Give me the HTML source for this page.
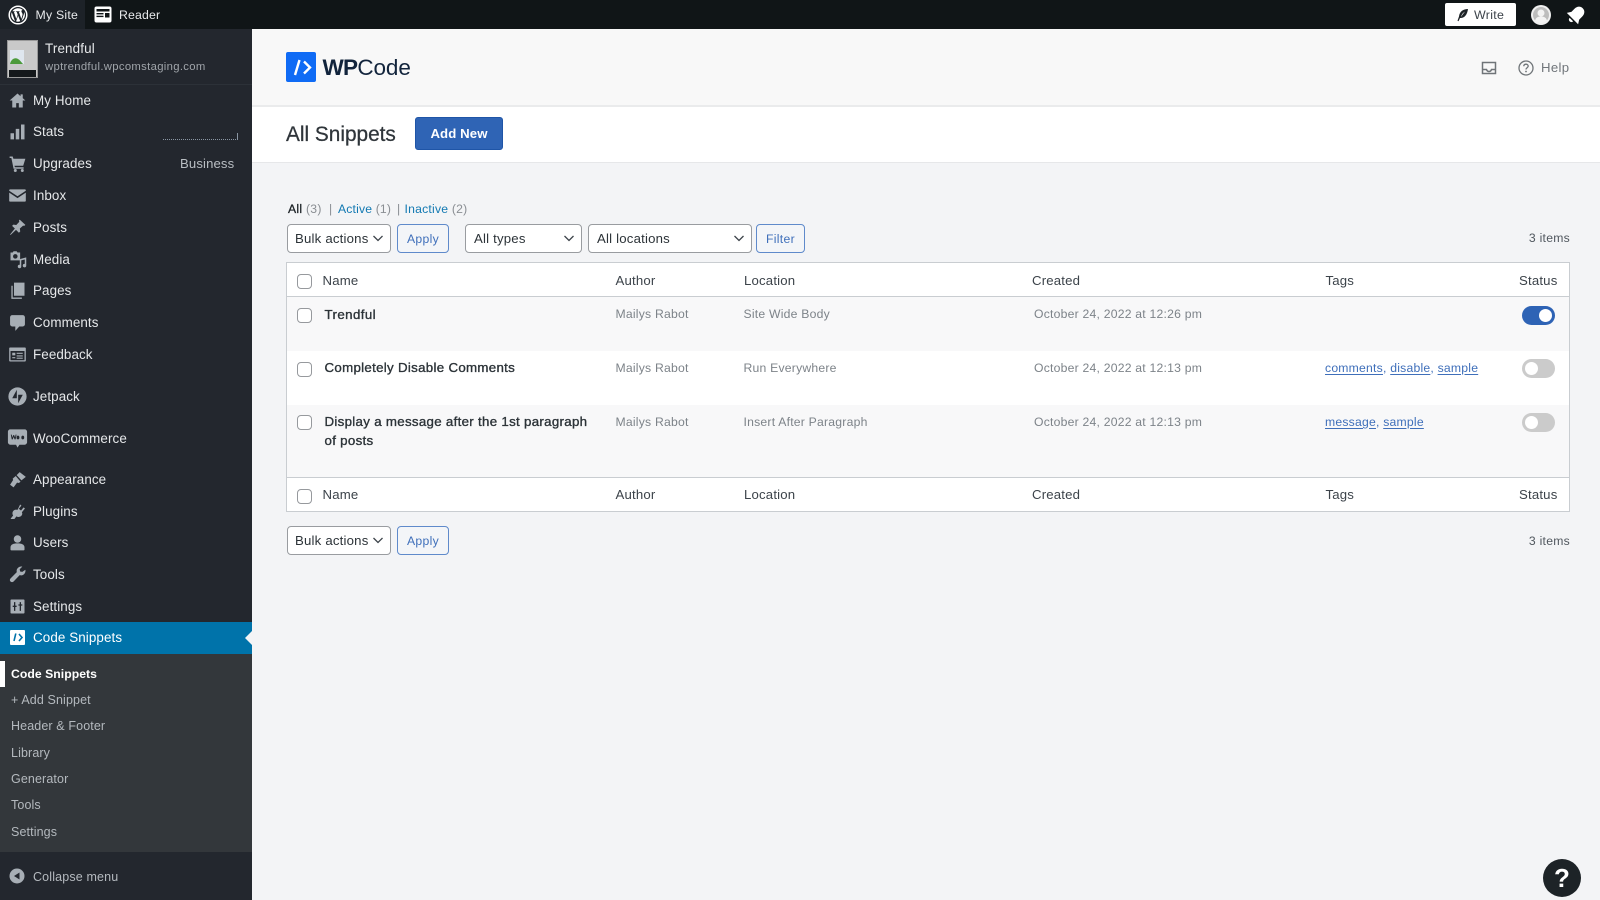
<!DOCTYPE html>
<html lang="en"><head><meta charset="utf-8"><title>All Snippets</title>
<style>
*{box-sizing:border-box}
html,body{margin:0;padding:0;width:1600px;height:900px;overflow:hidden;background:#f3f4f6;font-family:"Liberation Sans",sans-serif;-webkit-font-smoothing:antialiased}
.a{position:absolute}
.t{position:absolute;height:20px;line-height:20px;white-space:nowrap}
#top{left:0;top:0;width:1600px;height:29px;background:#101517}
#ms{left:0;top:0;width:85px;height:29px;background:#1d2228}
#side{left:0;top:29px;width:252px;height:871px;background:#23272e}
#sub{left:0;top:654px;width:252px;height:198px;background:#33373b}
.m{left:33px;font-size:13.4px;color:#e6e8ea;letter-spacing:.1px}
.s{left:11px;font-size:12.5px;color:#b4b9be;letter-spacing:.12px}
.i{position:absolute;left:6.500px;width:21px;height:21px;fill:#a7aeb5}
.hd{font-size:13.2px;color:#3c434a;letter-spacing:.18px}
.cell{font-size:12.2px;color:#7d8389;letter-spacing:.22px}
.nm{font-size:13.3px;color:#2c3338;font-weight:400;letter-spacing:.3px;-webkit-text-stroke:.35px #2c3338}
.lk{font-size:12.2px;color:#3f6fba;letter-spacing:.22px}
.lk u{text-underline-offset:2px}
.cb{position:absolute;left:297px;width:15px;height:15px;background:#fff;border:1px solid #96999d;border-radius:4px}
.sel{position:absolute;height:29px;background:#fff;border:1px solid #999ca0;border-radius:4px;font-size:13.2px;line-height:27px;padding-left:7px;color:#2c3338;letter-spacing:.2px}
.sel svg{position:absolute;right:6px;top:9px}
.btn{position:absolute;height:29px;background:#f3f5f8;border:1px solid #5f8acb;border-radius:4px;font-size:12.2px;line-height:28px;text-align:center;color:#3f6fba;letter-spacing:.3px}
.tg{position:absolute;left:1522px;width:33px;height:19px;border-radius:10px;background:#cbcbcb}
.tg i{position:absolute;left:3px;top:3px;width:13px;height:13px;border-radius:50%;background:#fff}
.tg.on{background:#2e63b5}.tg.on i{left:17px}
</style></head><body>

<div class="a" style="left:252px;top:29px;width:1348px;height:76px;background:#f8f8f8"></div>
<div class="a" style="left:252px;top:105px;width:1348px;height:2px;background:#eaebec"></div>
<div class="a" style="left:252px;top:107px;width:1348px;height:55px;background:#fff"></div>
<div class="a" style="left:252px;top:162px;width:1348px;height:1px;background:#e6e7e9"></div>

<div class="a" id="top"></div>
<div class="a" id="ms"></div>
<svg class="a" style="left:8px;top:5px" width="20" height="20" viewBox="0 0 20 20"><circle cx="10" cy="10" r="8.8" fill="none" stroke="#fff" stroke-width="1.5"/><path fill="#fff" d="M3.2 10c0 2.7 1.6 5 3.8 6.1L3.8 7.2c-.4.9-.6 1.8-.6 2.8zm11.4-.3c0-.8-.3-1.4-.6-1.9-.3-.6-.6-1-.6-1.6 0-.6.5-1.2 1.2-1.2h.1A6.8 6.8 0 0 0 4.4 6.3h.4c.7 0 1.8-.1 1.8-.1.4 0 .4.5 0 .6l-.7.1 2.4 7.1 1.4-4.3-1-2.8-.7-.1c-.4 0-.3-.6 0-.6 0 0 1.1.1 1.8.1.7 0 1.8-.1 1.8-.1.4 0 .4.5 0 .6l-.7.1 2.4 7 .7-2.2c.3-.9.5-1.6.5-2.1zM10.1 10.6l-2 5.8a6.8 6.8 0 0 0 4.2-.1l-2.2-5.7zm5.9-3.9c0 .2.1.5.1.7 0 .7-.1 1.5-.5 2.5l-2.1 6a6.800 6.800 0 0 0 2.500-9.200z"/></svg>
<div class="t" style="left:35.500px;top:5px;font-size:12.3px;color:#e8eaec;letter-spacing:.22px">My Site</div>
<svg class="a" style="left:94px;top:6px" width="18" height="17" viewBox="0 0 18 17"><rect x="0.5" y="0.5" width="17" height="16" rx="2" fill="#fff"/><rect x="2.5" y="3" width="13" height="2.5" fill="#101517"/><rect x="2.5" y="7" width="7" height="1.4" fill="#101517"/><rect x="2.5" y="9.7" width="7" height="1.4" fill="#101517"/><rect x="11" y="7" width="4.5" height="4.500" fill="#101517"/></svg>
<div class="t" style="left:119px;top:5px;font-size:12.3px;color:#e8eaec;letter-spacing:.15px">Reader</div>

<div class="a" style="left:1445px;top:3px;width:71px;height:23px;background:#fff;border-radius:2px"></div>
<svg class="a" style="left:1456px;top:8px" width="13" height="14" viewBox="0 0 13 14"><path fill="#1d2327" d="M12 1C7 1 3.6 3.6 3 8.5L1.5 12.8l1 .4L4 10c4.5.3 7.3-3.4 8-9zM5 9c.6-2.6 2-4.2 4-5.4C7.600 5.200 6.400 7 5 9z"/></svg>
<div class="t" style="left:1474px;top:5px;font-size:12.4px;color:#3c434a;letter-spacing:.3px">Write</div>
<svg class="a" style="left:1531px;top:5px" width="20" height="20" viewBox="0 0 20 20"><circle cx="10" cy="10" r="10" fill="#f0f0f0"/><circle cx="10" cy="10" r="8" fill="#bdbdbd"/><circle cx="10" cy="8" r="3.500" fill="#f3f3f3"/><path d="M4 15.500c1-3.500 3.500-4 6-4s5 .5 6 4a8 8 0 0 1-12 0z" fill="#f3f3f3"/></svg>
<svg class="a" style="left:1566px;top:4px" width="20" height="22" viewBox="0 0 20 22"><g transform="rotate(45 10 11)" fill="#fff"><path d="M10 1.500c-3.500 0-5.500 2.700-5.500 6.300v4.200L2 16h16l-2.500-4V7.800c0-3.600-2-6.300-5.500-6.300z"/><path d="M7.500 17.500h5a2.500 2.500 0 0 1-5 0z"/></g></svg>

<div class="a" id="side"></div>
<div class="a" style="left:0;top:84px;width:252px;height:1px;background:#2c3138"></div>
<div class="a" style="left:7px;top:40px;width:31px;height:38px;background:#c9c9c9;border:1px solid #999"></div>
<div class="a" style="left:9px;top:69.500px;width:27px;height:7px;background:#14181b"></div>
<svg class="a" style="left:9px;top:50px" width="16" height="15" viewBox="0 0 16 15"><rect width="14" height="14" x="1" y="0" fill="#dfe6ee"/><path d="M1 14c1-5 5-7 8-5 2 1 3 3 5 5z" fill="#4c9a3a"/></svg>
<div class="t" style="left:45px;top:39px;font-size:13.400px;color:#e6e8ea;letter-spacing:.15px">Trendful</div>
<div class="t" style="left:45px;top:57px;font-size:11.300px;color:#a0a5aa;letter-spacing:.32px">wptrendful.wpcomstaging.com</div>

<div class="t m" style="top:91px">My Home</div>
<svg class="i" style="top:90px" viewBox="0 0 24 24"><path d="M12 4L3 12h3v8h4.500v-5h3v5H18v-8h3l-3-2.700V5h-2.500v2.100z"/></svg>
<div class="t m" style="top:122px">Stats</div>
<svg class="i" style="top:121px" viewBox="0 0 24 24"><rect x="4" y="14" width="4" height="7"/><rect x="10" y="9" width="4" height="12"/><rect x="16" y="4" width="4" height="17"/></svg>
<div class="a" style="left:163px;top:139px;width:75px;height:1px;border-top:1px dotted #8a96a3"></div>
<div class="a" style="left:237px;top:133px;width:1px;height:7px;background:#8a96a3"></div>
<div class="t m" style="top:154px">Upgrades</div>
<svg class="i" style="top:153px" viewBox="0 0 24 24"><path d="M3 4h3.500l.8 2.500H21l-2.500 8H8.500l.5 1.800h10v1.700H7.500L5 5.700H3z"/><circle cx="9.500" cy="20" r="1.700"/><circle cx="17.500" cy="20" r="1.700"/></svg>
<div class="t" style="left:180px;top:154px;font-size:13.100px;color:#b9bec3;letter-spacing:.15px">Business</div>
<div class="t m" style="top:186px">Inbox</div>
<svg class="i" style="top:185px" viewBox="0 0 24 24"><path d="M3.500 5h17c.6 0 1 .4 1 1v.5L12 12.800 2.500 6.500V6c0-.6.400-1 1-1zM2.500 8.700L12 15l9.500-6.300V18c0 .6-.4 1-1 1h-17c-.6 0-1-.4-1-1z"/></svg>
<div class="t m" style="top:218px">Posts</div>
<svg class="i" style="top:217px" viewBox="0 0 24 24"><path d="M14.500 3l6.500 6-1.300 1.200-1.300-.4-3.700 3.400.4 3.300-1.500 1.500-3.300-3.300L4 20.500l-.5-.5 5.500-6.800-3.200-3 1.500-1.500 3.300.4 3.500-3.700-.5-1.200z"/></svg>
<div class="t m" style="top:250px">Media</div>
<svg class="i" style="top:249px" viewBox="0 0 24 24"><path d="M4 4h2.500l1-1.500h3.500L12 4h3v9H4zm5.500 1.800a2.600 2.600 0 1 0 0 5.200 2.600 2.600 0 0 0 0-5.200z"/><path d="M22 9.500V19a2 2 0 1 1-1.700-2v-5l-4 1V20a2 2 0 1 1-1.700-2v-6.500z"/></svg>
<div class="t m" style="top:281px">Pages</div>
<svg class="i" style="top:280px" viewBox="0 0 24 24"><path d="M8 3h12v15H8z"/><path d="M5 6.500h1.500V20H17v1.500H5z"/></svg>
<div class="t m" style="top:313px">Comments</div>
<svg class="i" style="top:312px" viewBox="0 0 24 24"><path d="M6 3.500h12c1.300 0 2.500 1.100 2.500 2.500v8c0 1.300-1.200 2.500-2.500 2.500h-4l-4.500 5v-5H6c-1.400 0-2.500-1.200-2.500-2.500V6c0-1.400 1.100-2.500 2.500-2.500z"/></svg>
<div class="t m" style="top:345px">Feedback</div>
<svg class="i" style="top:344px" viewBox="0 0 24 24"><path fill-rule="evenodd" d="M3.500 4h17c.6 0 1 .4 1 1v14c0 .6-.4 1-1 1h-17c-.6 0-1-.4-1-1V5c0-.6.400-1 1-1zM4 8v10.500h16V8zm2 2h3.500v3H6zm5 0h7v1.300h-7zm0 3h7v1.300h-7zm-5 2h3.500v1.300H6zm5 .5h7v1.300h-7z"/></svg>
<div class="t m" style="top:387px">Jetpack</div>
<svg class="i" style="top:385px;left:5.500px;width:23px;height:23px" viewBox="0 0 24 24"><path fill-rule="evenodd" d="M12 2.500a9.500 9.500 0 1 1 0 19 9.500 9.500 0 0 1 0-19zM11.300 5L6.500 13.800h4.800zm1.400 5.200V19l4.800-8.800z"/></svg>
<div class="t m" style="top:429px">WooCommerce</div>
<svg class="i" style="top:426px;left:5.500px;width:23px;height:23px" viewBox="0 0 24 24"><path fill-rule="evenodd" d="M4.500 3.500h15c1.300 0 2.500 1.100 2.500 2.500v11c0 1.300-1.200 2.500-2.500 2.500H14l-2 3-1.500-3h-6C3.100 19.500 2 18.300 2 17V6c0-1.400 1.100-2.500 2.500-2.500zM5 9l1 5h1l1-2.700L9 14h1l1-5h-1l-.5 3L8.500 9.500h-1L6.500 12 6 9zm7.500 1a1.500 2 0 1 0 0 4 1.500 2 0 0 0 0-4zm5 0a1.500 2 0 1 0 0 4 1.500 2 0 0 0 0-4z"/></svg>
<div class="t m" style="top:470px">Appearance</div>
<svg class="i" style="top:469px" viewBox="0 0 24 24"><path d="M14.500 3.500l7 5.500-5 4-5.500-6zM10 8l5.500 6.500-2 1.500-2-.5-4 5.500L3.500 18l3.500-5.500-.5-1.500z"/></svg>
<div class="t m" style="top:502px">Plugins</div>
<svg class="i" style="top:501px" viewBox="0 0 24 24"><path d="M15 4l1.500 1.300-3 3.500 2.500 2 3-3.500 1.500 1.300-3.500 4.200c.8 1.500.5 3-.7 4.200-1.500 1.400-3.800 1.700-5.500.5l-2.300 3H4.500l-.3-.4L7 16.500C5.800 14.800 6 12.600 7.500 11c1.300-1.300 3-1.500 4.500-.8z"/></svg>
<div class="t m" style="top:533px">Users</div>
<svg class="i" style="top:532px" viewBox="0 0 24 24"><circle cx="12" cy="8" r="4.300"/><path d="M4 20v-2.500c0-3 3-4.500 8-4.500s8 1.500 8 4.500V20c0 .6-.4 1-1 1H5c-.6 0-1-.4-1-1z"/></svg>
<div class="t m" style="top:565px">Tools</div>
<svg class="i" style="top:564px" viewBox="0 0 24 24"><path d="M21 6.500c.4 2-.2 3.700-1.500 5-1.500 1.400-3.300 1.800-5 1.200L7.500 20c-1 1-2.500 1-3.500 0s-1-2.500 0-3.500l7.200-7.200c-.5-1.800-.1-3.500 1.200-4.800C13.700 3.200 15.500 2.600 17.500 3l-3 3L15 8.500l2.500.5z"/></svg>
<div class="t m" style="top:597px">Settings</div>
<svg class="i" style="top:596px" viewBox="0 0 24 24"><path fill-rule="evenodd" d="M5 4h14c.6 0 1 .4 1 1v14c0 .6-.4 1-1 1H5c-.6 0-1-.4-1-1V5c0-.6.400-1 1-1zm3 3v4H6.500v1.500H8V17h1.500v-4.500H11V11H9.500V7zm6.500 0v2.500H13V11h1.500v6H16v-6h1.500V9.500H16V7z"/></svg>

<div class="a" style="left:0;top:622px;width:252px;height:32px;background:#0073aa"></div>
<div class="a" style="left:245px;top:630px;width:0;height:0;border-top:8px solid transparent;border-bottom:8px solid transparent;border-right:8px solid #f3f4f6"></div>
<svg class="a" style="left:10px;top:630px" width="15" height="15" viewBox="0 0 15 15"><rect width="15" height="15" rx="1" fill="#fff"/><path d="M5.800 3.500L4 11M9 4l3 3.500L9 11" fill="none" stroke="#0073aa" stroke-width="1.600"/></svg>
<div class="t m" style="top:628px;color:#fff">Code Snippets</div>

<div class="a" id="sub"></div>
<div class="a" style="left:0;top:661px;width:5px;height:26px;background:#fff"></div>
<div class="t s" style="top:664px;color:#fff;font-weight:700;font-size:12.2px;letter-spacing:.05px">Code Snippets</div>
<div class="t s" style="top:690px">+ Add Snippet</div>
<div class="t s" style="top:716px">Header &amp; Footer</div>
<div class="t s" style="top:743px">Library</div>
<div class="t s" style="top:769px">Generator</div>
<div class="t s" style="top:795px">Tools</div>
<div class="t s" style="top:822px">Settings</div>
<svg class="a" style="left:9px;top:868px" width="16" height="16" viewBox="0 0 16 16"><circle cx="8" cy="8" r="7.500" fill="#a7aeb5"/><path d="M10.500 4.500v7L5 8z" fill="#23272e"/></svg>
<div class="t" style="left:33px;top:867px;font-size:12.500px;color:#b4b9be;letter-spacing:.15px">Collapse menu</div>

<svg class="a" style="left:286px;top:52px" width="30" height="30" viewBox="0 0 30 30"><rect width="30" height="30" rx="2" fill="#0f6bf5"/><path d="M13.500 8L9 23M18 9.500L24 15.500 18 21.500" fill="none" stroke="#fff" stroke-width="2.400"/></svg>
<div class="t" style="left:322.500px;top:52px;height:32px;line-height:32px;font-size:22.500px;color:#12243c;letter-spacing:-.1px"><span style="font-weight:700;letter-spacing:-.7px">WP</span>Code</div>
<svg class="a" style="left:1481px;top:60px" width="16" height="16" viewBox="0 0 16 16"><path d="M1.500 2.500h13v11h-13zM1.500 9.500h4c.5 1.500 1.500 2 2.500 2s2-.5 2.500-2h4" fill="none" stroke="#6f7478" stroke-width="1.500"/></svg>
<svg class="a" style="left:1518px;top:60px" width="16" height="16" viewBox="0 0 16 16"><circle cx="8" cy="8" r="7" fill="none" stroke="#6f7478" stroke-width="1.300"/><path d="M5.800 6.200c0-1.300 1-2 2.200-2s2.200.8 2.200 1.900c0 1.600-2.200 1.700-2.200 3.400" fill="none" stroke="#6f7478" stroke-width="1.300"/><circle cx="8" cy="11.500" r=".9" fill="#6f7478"/></svg>
<div class="t" style="left:1541px;top:58px;font-size:13.200px;color:#71767b;letter-spacing:.3px">Help</div>

<div class="t" style="left:286px;top:125px;font-size:20.800px;color:#2f353a;letter-spacing:0;-webkit-text-stroke:.25px #2f353a">All Snippets</div>
<div class="a" style="left:415px;top:117px;width:88px;height:33px;background:#2f64b5;border:1px solid #1f55a7;border-radius:3px;color:#fff;font-size:13.200px;font-weight:700;text-align:center;line-height:31px;letter-spacing:.1px">Add New</div>

<div class="t" style="left:288px;top:199px;font-size:12.200px;color:#8a8e93;letter-spacing:.26px"><span style="color:#1d2327;-webkit-text-stroke:.3px #1d2327">All</span> (3)</div>
<div class="t" style="left:329px;top:199px;font-size:12.200px;color:#8a8e93">|</div>
<div class="t" style="left:338px;top:199px;font-size:12.200px;color:#8a8e93;letter-spacing:.16px"><span style="color:#1279b2">Active</span> (1)</div>
<div class="t" style="left:397px;top:199px;font-size:12.200px;color:#8a8e93">|</div>
<div class="t" style="left:404.500px;top:199px;font-size:12.200px;color:#8a8e93;letter-spacing:.22px"><span style="color:#1279b2">Inactive</span> (2)</div>

<div class="sel" style="left:287px;top:224px;width:104px">Bulk actions<svg width="12" height="9" viewBox="0 0 12 9"><path d="M1.500 2L6 6.500 10.500 2" fill="none" stroke="#3c434a" stroke-width="1.300"/></svg></div>
<div class="btn" style="left:397px;top:224px;width:52px">Apply</div>
<div class="sel" style="left:465px;top:224px;width:117px;padding-left:8px">All types<svg width="12" height="9" viewBox="0 0 12 9"><path d="M1.500 2L6 6.500 10.500 2" fill="none" stroke="#3c434a" stroke-width="1.300"/></svg></div>
<div class="sel" style="left:588px;top:224px;width:164px;padding-left:8px">All locations<svg width="12" height="9" viewBox="0 0 12 9"><path d="M1.500 2L6 6.500 10.500 2" fill="none" stroke="#3c434a" stroke-width="1.300"/></svg></div>
<div class="btn" style="left:756px;top:224px;width:49px">Filter</div>
<div class="t" style="right:30px;top:228px;font-size:12.200px;color:#50575e;letter-spacing:.26px">3 items</div>

<div class="a" style="left:286px;top:262px;width:1284px;height:250px;background:#fff;border:1px solid #c9cdd1"></div>
<div class="a" style="left:287px;top:296px;width:1282px;height:1px;background:#c9cdd1"></div>
<div class="a" style="left:287px;top:297px;width:1282px;height:54px;background:#f8f8f9"></div>
<div class="a" style="left:287px;top:405px;width:1282px;height:72px;background:#f8f8f9"></div>
<div class="a" style="left:287px;top:477px;width:1282px;height:1px;background:#c9cdd1"></div>

<div class="cb" style="top:274px"></div>
<div class="t hd" style="left:322.500px;top:270.500px">Name</div><div class="t hd" style="left:615.500px;top:270.500px">Author</div><div class="t hd" style="left:744px;top:270.500px">Location</div><div class="t hd" style="left:1032px;top:270.500px">Created</div><div class="t hd" style="left:1325.500px;top:270.500px">Tags</div><div class="t hd" style="left:1519px;top:270.500px">Status</div>

<div class="cb" style="top:308px"></div>
<div class="t nm" style="left:324.500px;top:304.500px;letter-spacing:.4px">Trendful</div><div class="t cell" style="left:615.500px;top:304px">Mailys Rabot</div><div class="t cell" style="left:743.500px;top:304px">Site Wide Body</div><div class="t cell" style="left:1034px;top:304px">October 24, 2022 at 12:26 pm</div>
<div class="tg on" style="top:306px"><i></i></div>

<div class="cb" style="top:362px"></div>
<div class="t nm" style="left:324.500px;top:358px">Completely Disable Comments</div><div class="t cell" style="left:615.500px;top:358px">Mailys Rabot</div><div class="t cell" style="left:743.500px;top:358px">Run Everywhere</div><div class="t cell" style="left:1034px;top:358px">October 24, 2022 at 12:13 pm</div>
<div class="t lk" style="left:1325px;top:358px"><u>comments</u>, <u>disable</u>, <u>sample</u></div>
<div class="tg" style="top:359px"><i></i></div>

<div class="cb" style="top:415px"></div>
<div class="t nm" style="left:324.500px;top:412px">Display a message after the 1st paragraph</div><div class="t nm" style="left:324.500px;top:430.500px">of posts</div><div class="t cell" style="left:615.500px;top:412px">Mailys Rabot</div><div class="t cell" style="left:743.500px;top:412px">Insert After Paragraph</div><div class="t cell" style="left:1034px;top:412px">October 24, 2022 at 12:13 pm</div>
<div class="t lk" style="left:1325px;top:412px"><u>message</u>, <u>sample</u></div>
<div class="tg" style="top:413px"><i></i></div>

<div class="cb" style="top:488.500px"></div>
<div class="t hd" style="left:322.500px;top:485px">Name</div><div class="t hd" style="left:615.500px;top:485px">Author</div><div class="t hd" style="left:744px;top:485px">Location</div><div class="t hd" style="left:1032px;top:485px">Created</div><div class="t hd" style="left:1325.500px;top:485px">Tags</div><div class="t hd" style="left:1519px;top:485px">Status</div>

<div class="sel" style="left:287px;top:526px;width:104px;line-height:28px">Bulk actions<svg width="12" height="9" viewBox="0 0 12 9"><path d="M1.500 2L6 6.500 10.500 2" fill="none" stroke="#3c434a" stroke-width="1.300"/></svg></div>
<div class="btn" style="left:397px;top:526px;width:52px">Apply</div>
<div class="t" style="right:30px;top:531px;font-size:12.200px;color:#50575e;letter-spacing:.26px">3 items</div>

<div class="a" style="left:1543px;top:859px;width:38px;height:38px;border-radius:50%;background:#1d2327;color:#fff;font-size:26px;font-weight:700;text-align:center;line-height:38px">?</div>
</body></html>
